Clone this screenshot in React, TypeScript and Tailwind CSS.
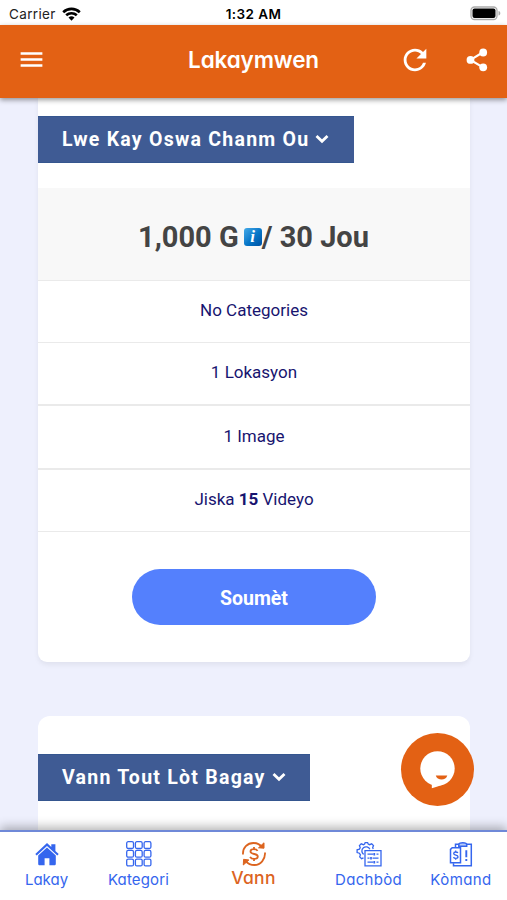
import React from 'react';
import { MdMenu, MdRefresh } from 'react-icons/md';

const geo = "font-['Inter',sans-serif] [font-feature-settings:'cv11','ss03']";

function Chevron() {
  return (
    <svg width="14" height="10" viewBox="0 0 14 10" fill="none" className="-mt-[3px] ml-[6px] shrink-0">
      <path d="M1.500 2 7 7.300 12.500 2" stroke="#fff" strokeWidth="2.800" />
    </svg>
  );
}

function Ribbon({ label, className }: { label: string; className: string }) {
  return (
    <button className={`flex h-[47px] items-center border-y border-[#35568f] bg-[#3f5b94] pl-6 pt-px text-white ${className}`}>
      <span className="whitespace-nowrap text-[19.5px] font-bold leading-6 tracking-[1.250px]">{label}</span>
      <Chevron />
    </button>
  );
}

function ShareIcon() {
  return (
    <svg width="22" height="24" viewBox="0 0 22 24" fill="currentColor">
      <path d="M17 4.300 4.500 11.900 17 19.400" fill="none" stroke="currentColor" strokeWidth="2.200" />
      <circle cx="17.200" cy="4.500" r="3.900" />
      <circle cx="4.500" cy="11.900" r="3.900" />
      <circle cx="17.200" cy="19.300" r="3.900" />
    </svg>
  );
}

function HomeIcon() {
  return (
    <svg width="24" height="23" viewBox="0 0 24 23" fill="currentColor">
      <path d="M12 0 0.3 11l1.400 1.400L12 3l10.300 9.400 1.400-1.400-3.300-3.100V1.200h-4.100v2.800z" />
      <path d="M12 4.600 3.200 12.500v8.200c0 1 .6 1.600 1.600 1.600H9.600v-7.100h4.800v7.100h4.800c1 0 1.600-.6 1.600-1.600v-8.200z" />
    </svg>
  );
}

function GridIcon() {
  return (
    <svg width="26" height="26" viewBox="0 0 26 26" fill="none" stroke="currentColor" strokeWidth="1.300">
      {[0.7, 9.4, 18.1].map((y) =>
        [0.7, 9.4, 18.1].map((x) => <rect key={`${x}-${y}`} x={x} y={y} width="6.800" height="6.800" rx="1.500" />),
      )}
    </svg>
  );
}

function SellIcon() {
  return (
    <svg width="26" height="26" viewBox="0 0 26 26" fill="none" stroke="currentColor" strokeWidth="1.800">
      <path d="M2 13.500C1.500 6.600 6.500 2 12.500 2c3.500 0 6.300 1.300 8.500 4" />
      <path d="M24 11.500C24.500 18.400 19.500 24 13.500 24c-3.500 0-6.800-1.600-9-4.200" />
      <path d="M23 1.800v5.400l-5.500-.4zM2.300 24l.3-5.700 5.300.7z" fill="currentColor" strokeWidth="1" />
      <path d="M16.600 9.900C15.800 8.600 14.700 8.200 13 8.200c-2 0-3.500.9-3.500 2.300 0 3.600 7.300 1.400 7.300 5 0 1.600-1.600 2.400-3.700 2.400-1.900 0-3.300-.7-4-2.100M13 6v2.200m0 9.700v2" strokeWidth="1.800" />
    </svg>
  );
}

function DashboardIcon() {
  return (
    <svg width="26" height="25" viewBox="0 0 26 25" fill="none" stroke="currentColor" strokeWidth="1.300">
      <path d="M7.500 15.800 5.600 16.700 3.700 14.900l.7-2-1-1.700-2.300-.7V7.800l2.300-.6.8-1.600-.8-2 1.800-1.800 2.200.9L8.600 2l.6-1.400h2.400L12.200 2l1.400.7 2.100-.9 1.800 1.800-.8 2 .5 1.300" />
      <path d="M7.600 12.400a4.200 4.200 0 1 1 6.300-5.100" />
      <path d="M9 8.600h16v15.200H9z" />
      <path d="M11.500 12.200h6m3 0h2M11.500 16.200h2m3 0h6M11.500 20.200h6m3 0h2" />
      <path d="M18.300 10.900v2.600M15 14.900v2.600M18.300 18.900v2.600" strokeWidth="1.700" />
    </svg>
  );
}

function OrderIcon() {
  return (
    <svg width="24" height="25" viewBox="0 0 24 25" fill="none" stroke="currentColor" strokeWidth="1.500">
      <path d="M6.500 5.500V2.200H10M17.500 2.200h4.800v21.500H4.500v-2.500" />
      <path d="M9.800 4.300V2.600c0-2.400 7.900-2.400 7.900 0v1.700z" fill="currentColor" fillOpacity="0.350" />
      <path d="M3.200 5.700h8.300v15.100H1.500V7.400z" />
      <path d="M8.900 11c-.4-.7-1.200-1-2.200-1-1.200 0-2 .6-2 1.500 0 2.300 4.300.9 4.300 3.200 0 1-.9 1.600-2.200 1.600-1 0-1.900-.4-2.300-1.200M6.700 8.600V10m0 6.300v1.400" strokeWidth="1.300" />
      <path d="M17.300 8.200v7M17.300 17v2" strokeWidth="1.900" />
    </svg>
  );
}

function NavItem({ label, icon, className }: { label: string; icon: React.ReactNode; className: string }) {
  return (
    <a className={`flex h-full flex-col items-center text-[#3566ee] ${className}`}>
      <span className="flex h-[44px] items-center justify-center">{icon}</span>
      <span className={`-mt-[6px] whitespace-nowrap text-[15px] leading-5 ${geo}`}>{label}</span>
    </a>
  );
}

export default function App() {
  return (
    <div className="relative flex h-[900px] w-[507px] flex-col overflow-hidden bg-[#eef0fd] font-['Roboto',sans-serif]">
      <div className="relative flex h-[25px] shrink-0 items-center justify-between bg-white pl-[9px] pr-[6px] pt-[2px] font-['Inter',sans-serif] text-black">
        <div className="flex items-center gap-[6px]">
          <span className="text-[13.5px] leading-5 tracking-[0.350px] text-[#222]">Carrier</span>
          <svg width="19" height="14" viewBox="0 0 19 14" fill="none" stroke="#000" strokeWidth="2.600">
            <path d="M1.200 5.200a12 12 0 0 1 16.600 0M4.200 8.300a7.700 7.700 0 0 1 10.600 0" />
            <path d="m9.500 13.800-3-3.200a4.500 4.500 0 0 1 6 0z" fill="#000" stroke="none" />
          </svg>
        </div>
        <span className="absolute inset-x-0 text-center text-[13.5px] font-semibold leading-5 tracking-[0.4px]">1:32 AM</span>
        <svg width="31" height="15" viewBox="0 0 31 15">
          <rect x="1" y="1" width="26" height="12.500" rx="3.500" fill="#fff" stroke="#aaa" strokeWidth="1.300" />
          <rect x="2.500" y="2.500" width="23" height="9.500" rx="2" />
          <path d="M28.500 5v4.500c1.200-.3 1.800-1.100 1.800-2.250S29.700 5.300 28.500 5" fill="#aaa" />
        </svg>
      </div>

      <header className="relative z-10 flex h-[73px] shrink-0 items-center bg-[#e36114] pl-[17px] pr-[19px] text-white shadow-[0_2px_5px_rgba(0,0,0,0.4)]">
        <MdMenu size={29} className="-mt-[4px]" />
        <h1 className={`absolute inset-x-0 -mt-[3px] text-center text-[22.5px] font-semibold leading-7 tracking-[-0.150px] ${geo}`}>Lakaymwen</h1>
        <div className="-mt-[4px] ml-auto flex items-center gap-[34px]">
          <MdRefresh size={34} />
          <ShareIcon />
        </div>
      </header>

      <main className="flex h-[732px] shrink-0 flex-col overflow-hidden px-[38px]">
        <section className="flex h-[564px] w-[432px] shrink-0 flex-col rounded-b-[9px] bg-white pt-[18px] shadow-[0_3px_5px_rgba(0,0,0,0.06)]">
          <Ribbon label="Lwe Kay Oswa Chanm Ou" className="w-[316px]" />
          <div className="mt-[25px] flex h-[92px] items-center justify-center bg-[#f8f8f8] pr-px pt-[5px] text-[29px] font-bold leading-8 text-[#444]">
            <span>1,000 G</span>
            <span className="ml-[5px] flex h-[18px] w-[18px] items-center justify-center rounded-[3px] bg-linear-to-br from-[#42aae8] via-[#0879ca] to-[#0050a2] font-['Liberation_Serif',serif] text-[17px] font-bold italic leading-none text-white">i</span>
            <span>/ 30 Jou</span>
          </div>
          <ul className="text-center text-[17px] text-[#17146f]">
            <li className="h-[62px] border-t border-[#eaeaea] leading-[59px]">No Categories</li>
            <li className="h-[62px] border-t border-[#eaeaea] leading-[59px]">1 Lokasyon</li>
            <li className="h-[64px] border-t-2 border-[#eaeaea] leading-[61px]">1 Image</li>
            <li className="h-[64px] border-b border-t-2 border-[#eaeaea] leading-[59px]">
              Jiska <b>15</b> Videyo
            </li>
          </ul>
          <button className="ml-[94px] mt-[37px] h-[56px] w-[244px] rounded-full bg-[#5480fd] pt-[3px] text-[19.5px] font-bold text-white">Soumèt</button>
        </section>

        <section className="mt-[54px] flex h-[160px] w-[432px] shrink-0 flex-col rounded-t-[12px] bg-white pt-[38px]">
          <Ribbon label="Vann Tout Lòt Bagay" className="w-[272px]" />
        </section>
      </main>

      <button aria-label="Chat" className="absolute left-[401px] top-[733px] h-[73px] w-[73px] rounded-full bg-[#e36114]">
        <svg width="73" height="73" viewBox="0 0 73 73">
          <circle cx="36.500" cy="35.500" r="17.200" fill="#fff" />
          <path d="M30.800 49v6.300C40 52.500 47 49.500 51 44z" fill="#fff" />
          <path d="M34.800 42.500h11.500c-1 5.300-10.500 5.300-11.500 0" fill="#e36114" />
        </svg>
      </button>

      <nav className="relative z-10 flex h-[70px] shrink-0 border-t-2 border-[#6f89d8] bg-white shadow-[0_-3px_10px_rgba(0,0,0,0.3)]">
        <NavItem label="Lakay" icon={<HomeIcon />} className="w-[92px] pl-px" />
        <NavItem label="Kategori" icon={<GridIcon />} className="w-[93px] tracking-[0.150px]" />
        <a className="flex h-full w-[137px] flex-col items-center text-[#dc641f]">
          <span className="flex h-[43px] items-center"><SellIcon /></span>
          <span className={`-mt-[9px] text-[17.5px] font-medium leading-6 tracking-[0.3px] ${geo}`}>Vann</span>
        </a>
        <NavItem label="Dachbòd" icon={<DashboardIcon />} className="w-[93px] tracking-[0.3px]" />
        <NavItem label="Kòmand" icon={<OrderIcon />} className="w-[92px] tracking-[0.4px]" />
      </nav>
    </div>
  );
}
